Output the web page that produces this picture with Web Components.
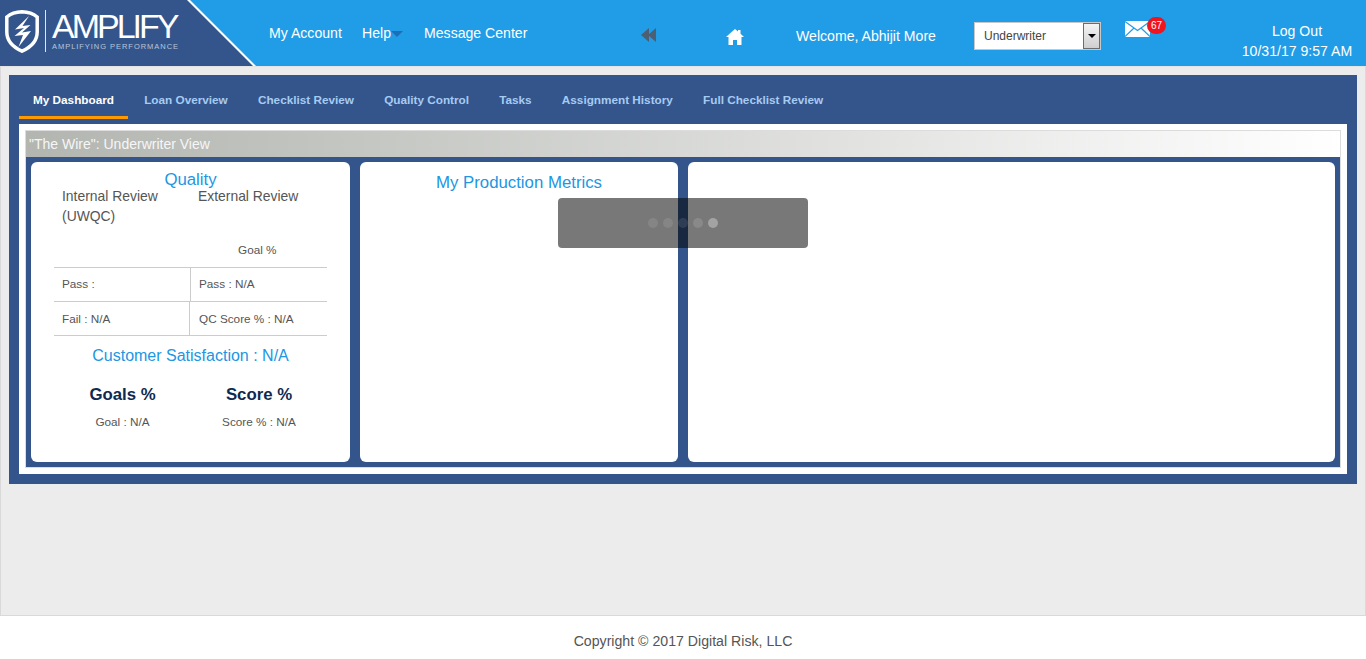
<!DOCTYPE html>
<html lang="en">
<head>
<meta charset="utf-8">
<title>Amplify</title>
<style>
  html, body { margin: 0; height: 100%; }
  body { font-family: "Liberation Sans", Arial, sans-serif; background: #fff; }
</style>
</head>
<body>
<app-shell>
  <app-header slot="header"></app-header>
  <dash-panel slot="main">
    <dash-tabs slot="tabs"></dash-tabs>
    <wire-box slot="body">
      <quality-card></quality-card>
      <info-card style="width:318px"><h2 style="margin:0;padding-top:12px;font:normal 16.8px/18px 'Liberation Sans',Arial,sans-serif;color:#2196e3;text-align:center">My Production Metrics</h2></info-card>
      <info-card style="flex:1"></info-card>
    </wire-box>
  </dash-panel>
  <app-footer slot="footer"></app-footer>
</app-shell>
<loading-toast></loading-toast>

<script>
/**
 * Shorthand that makes a custom element from a template string.
 */
function define (name, html) {
  const template = document.createElement('template')
  template.innerHTML = html
  customElements.define(name, class extends HTMLElement {
    constructor () {
      super()
      this.attachShadow({ mode: 'open' })
        .appendChild(template.content.cloneNode(true))
    }
  })
}

define('app-shell', `
<style>
  :host { display: flex; flex-direction: column; height: 659px; overflow: hidden; }
  header { height: 66px; flex: none; }
  main {
    height: 550px; flex: none; box-sizing: border-box; padding: 8px 8px 0 8px;
    background: #ececec; border: 1px solid #d9d9d9; border-top-color: #e4e4e4;
  }
  footer { flex: 1; }
</style>
<header><slot name="header"></slot></header>
<main><slot name="main"></slot></main>
<footer><slot name="footer"></slot></footer>
`)

define('app-header', `
<style>
  :host {
    display: flex; align-items: center; height: 66px; background: #219ce6;
    color: #fff; font-size: 14.1px; white-space: nowrap;
  }
  .brand { flex: none; width: 256px; height: 66px; background: #fff; clip-path: polygon(0 0, 190px 0, 256px 66px, 0 66px); }
  .brand-in {
    height: 66px; display: flex; align-items: center; box-sizing: border-box; padding-left: 5px;
    background: #34558b; clip-path: polygon(0 0, 187px 0, 253px 66px, 0 66px);
  }
  .shield { flex: none; display: block; margin-top: -3px; }
  .rule { flex: none; width: 1px; height: 42px; margin: -5px 6px 0 6px; background: #dfe6f0; }
  .word { margin-top: -5px; }
  .amp { font-size: 34px; line-height: 30px; letter-spacing: -3px; color: #fff; }
  .sub { font-size: 7.5px; line-height: 9px; letter-spacing: .96px; color: #b9c5d9; margin-top: 1px; }
  nav { flex: none; width: 372px; margin-left: 13px; display: flex; align-items: center; }
  .caret { width: 0; height: 0; border: 6.5px solid transparent; border-top: 6px solid #1a6fb8; border-bottom: 0; margin: 2px 20px 0 0; }
  .rew { flex: none; display: block; margin-top: 4px; }
  .home { flex: none; display: block; margin: 8px 0 0 70px; }
  .welcome { flex: none; width: 178px; margin: 6px 0 0 52px; }
  .pick {
    flex: none; box-sizing: border-box; width: 127px; height: 28px; margin-top: 6px; display: flex;
    background: #fff; border: 1px solid #c8c8c8; color: #444; font-size: 12px; line-height: 26px; padding-left: 9px;
  }
  .pick span { flex: 1; }
  .pick i {
    width: 17px; height: 26px; box-sizing: border-box; border: 1.5px solid #6c6c6c;
    background: linear-gradient(#f4f4f4, #cfcfcf); display: flex; align-items: center; justify-content: center;
  }
  .pick i::after { content: ""; border: 4px solid transparent; border-top: 4px solid #000; border-bottom: 0; }
  .mail { flex: none; position: relative; width: 25px; height: 16px; margin: -9px 0 0 24px; }
  .mail svg { display: block; }
  .badge {
    position: absolute; left: 22px; top: -4px; width: 19px; height: 17px; border-radius: 9px;
    background: #f0141e; color: #fff; font-size: 10px; line-height: 17px; text-align: center;
  }
  .out { flex: none; width: 112px; margin-left: 91px; text-align: center; line-height: 20px; margin-top: 16px; }
</style>
<div class="brand"><div class="brand-in">
  <svg class="shield" width="34" height="43" viewBox="0 0 34 43">
    <path d="M17 1.800C11 2 6 3.500 1.800 7v15c0 9 7 15.500 15.200 19.200C25.200 37.500 32.200 31 32.200 22V7C28 3.500 23 2 17 1.800Z" fill="none" stroke="#fff" stroke-width="3.500"/>
    <path d="M24 6 10 19.500l9-1.500-9.500 8 8.500-1-4.500 12 12.500-16-9 1.500 8.500-7.500-8 1Z" fill="#fff"/>
  </svg>
  <div class="rule"></div>
  <div class="word"><div class="amp">AMPLIFY</div><div class="sub">AMPLIFYING PERFORMANCE</div></div>
</div></div>
<nav>
  <span style="width:73px;margin-right:20px">My Account</span>
  <span>Help</span><span class="caret" style="margin-right:21px"></span>
  <span>Message Center</span>
</nav>
<svg class="rew" width="15" height="14" viewBox="0 0 15 14"><path d="M8 0v14L0 7ZM15 0v14L7 7Z" fill="#4c5f73"/></svg>
<svg class="home" width="18" height="16" viewBox="0 0 18 16"><path d="M9 0 12 2.600V1h2.500v3.700L18 8h-2.500v8H11v-5H7v5H2.500V8H0Z" fill="#fff"/></svg>
<div class="welcome">Welcome, Abhijit More</div>
<div class="pick"><span>Underwriter</span><i></i></div>
<div class="mail">
  <svg width="25" height="16" viewBox="0 0 25 16"><rect width="25" height="16" fill="#fff"/><path d="M0 .5 12.500 9.500 25 .5M0 15.500 9 7M25 15.500 16 7" fill="none" stroke="#219ce6" stroke-width="1.200"/></svg>
  <span class="badge">67</span>
</div>
<div class="out"><div>Log Out</div><div>10/31/17 9:57 AM</div></div>
`)

define('dash-panel', `
<style>
  :host { display: block; box-sizing: border-box; width: 1348px; height: 409px; background: #34558b; padding: 0 10px 10px 10px; }
  .tabs { height: 49px; }
  .body { height: 350px; background: #fff; box-sizing: border-box; padding: 6px; }
</style>
<div class="tabs"><slot name="tabs"></slot></div>
<div class="body"><slot name="body"></slot></div>
`)

define('dash-tabs', `
<style>
  :host { display: flex; gap: 2.2px; padding-top: 13px; font-size: 11.75px; font-weight: bold; color: #a6cbf3; white-space: nowrap; }
  span { box-sizing: border-box; height: 31px; padding: 5px 14px 0; line-height: 14px; }
  .on { color: #fff; border-bottom: 3px solid #f90; }
</style>
<span class="on">My Dashboard</span>
<span>Loan Overview</span>
<span>Checklist Review</span>
<span>Quality Control</span>
<span>Tasks</span>
<span>Assignment History</span>
<span>Full Checklist Review</span>
`)

define('wire-box', `
<style>
  :host { display: block; box-sizing: border-box; height: 338px; border: 1px solid #dcdcdc; }
  .title {
    height: 26px; padding-left: 3px; line-height: 27px; font-size: 14px; color: #f6f6f6;
    background: linear-gradient(90deg, #b2b5b0, #c4c6c2 25%, #fff);
  }
  .row { box-sizing: border-box; height: 310px; display: flex; gap: 10px; padding: 5px; background: #34558b; }
</style>
<div class="title">"The Wire": Underwriter View</div>
<div class="row"><slot></slot></div>
`)

define('info-card', `
<style>
  :host { display: block; height: 300px; background: #fff; border-radius: 6px; flex: none; }
</style>
<slot></slot>
`)

define('quality-card', `
<style>
  :host {
    display: block; flex: none; box-sizing: border-box; width: 319px; height: 300px; background: #fff; border-radius: 6px;
    color: #555; font-size: 11.75px;
  }
  h2 { margin: 0; font-size: 16px; font-weight: normal; line-height: 18px; color: #2196e3; text-align: center; }
  .q { padding-top: 9px; font-size: 16.8px; }
  .reviews { display: flex; font-size: 13.9px; line-height: 20px; height: 57px; margin-top: -3px; padding-left: 31px; }
  .reviews div:first-child { width: 136px; }
  .goal { padding-left: 207px; line-height: 14px; height: 24px; }
  .grid { margin-left: 23px; width: 273px; border-top: 1px solid #ccc; }
  .tr { display: flex; height: 34px; box-sizing: border-box; border-bottom: 1px solid #ccc; line-height: 33px; }
  .tr div { box-sizing: border-box; padding-left: 8px; }
  .tr div:first-child { border-right: 1px solid #ccc; }
  .cs { margin-top: 11px; }
  .scores { display: flex; margin-top: 21px; padding-left: 23px; width: 273px; text-align: center; }
  .scores > div { flex: none; }
  b { display: block; font-size: 16.8px; line-height: 18px; color: #0e2a50; }
  p { margin: 11px 0 0; line-height: 14px; }
</style>
<h2 class="q">Quality</h2>
<div class="reviews"><div>Internal Review (UWQC)</div><div>External Review</div></div>
<div class="goal">Goal %</div>
<div class="grid">
  <div class="tr" style="line-height:32px"><div style="width:137px">Pass :</div><div>Pass : N/A</div></div>
  <div class="tr"><div style="width:136px">Fail : N/A</div><div style="padding-left:9px">QC Score % : N/A</div></div>
</div>
<h2 class="cs">Customer Satisfaction : N/A</h2>
<div class="scores">
  <div style="width:137px"><b>Goals %</b><p>Goal : N/A</p></div>
  <div style="width:136px"><b>Score %</b><p>Score % : N/A</p></div>
</div>
`)

define('loading-toast', `
<style>
  :host {
    position: absolute; left: 558px; top: 198px; width: 250px; height: 50px; border-radius: 4px;
    background: rgba(0, 0, 0, .53); display: flex; align-items: center; justify-content: center; gap: 5px;
  }
  i { width: 10px; height: 10px; border-radius: 50%; background: rgba(255, 255, 255, .1); }
  i:nth-of-type(4) { background: rgba(255, 255, 255, .13); }
  i:nth-of-type(5) { background: rgba(255, 255, 255, .32); }
</style>
<i></i><i></i><i></i><i></i><i></i>
`)

define('app-footer', `
<style>
  :host { display: block; text-align: center; font-size: 14.15px; line-height: 16px; padding-top: 17px; color: #555; }
</style>
Copyright © 2017 Digital Risk, LLC
`)
</script>
</body>
</html>
